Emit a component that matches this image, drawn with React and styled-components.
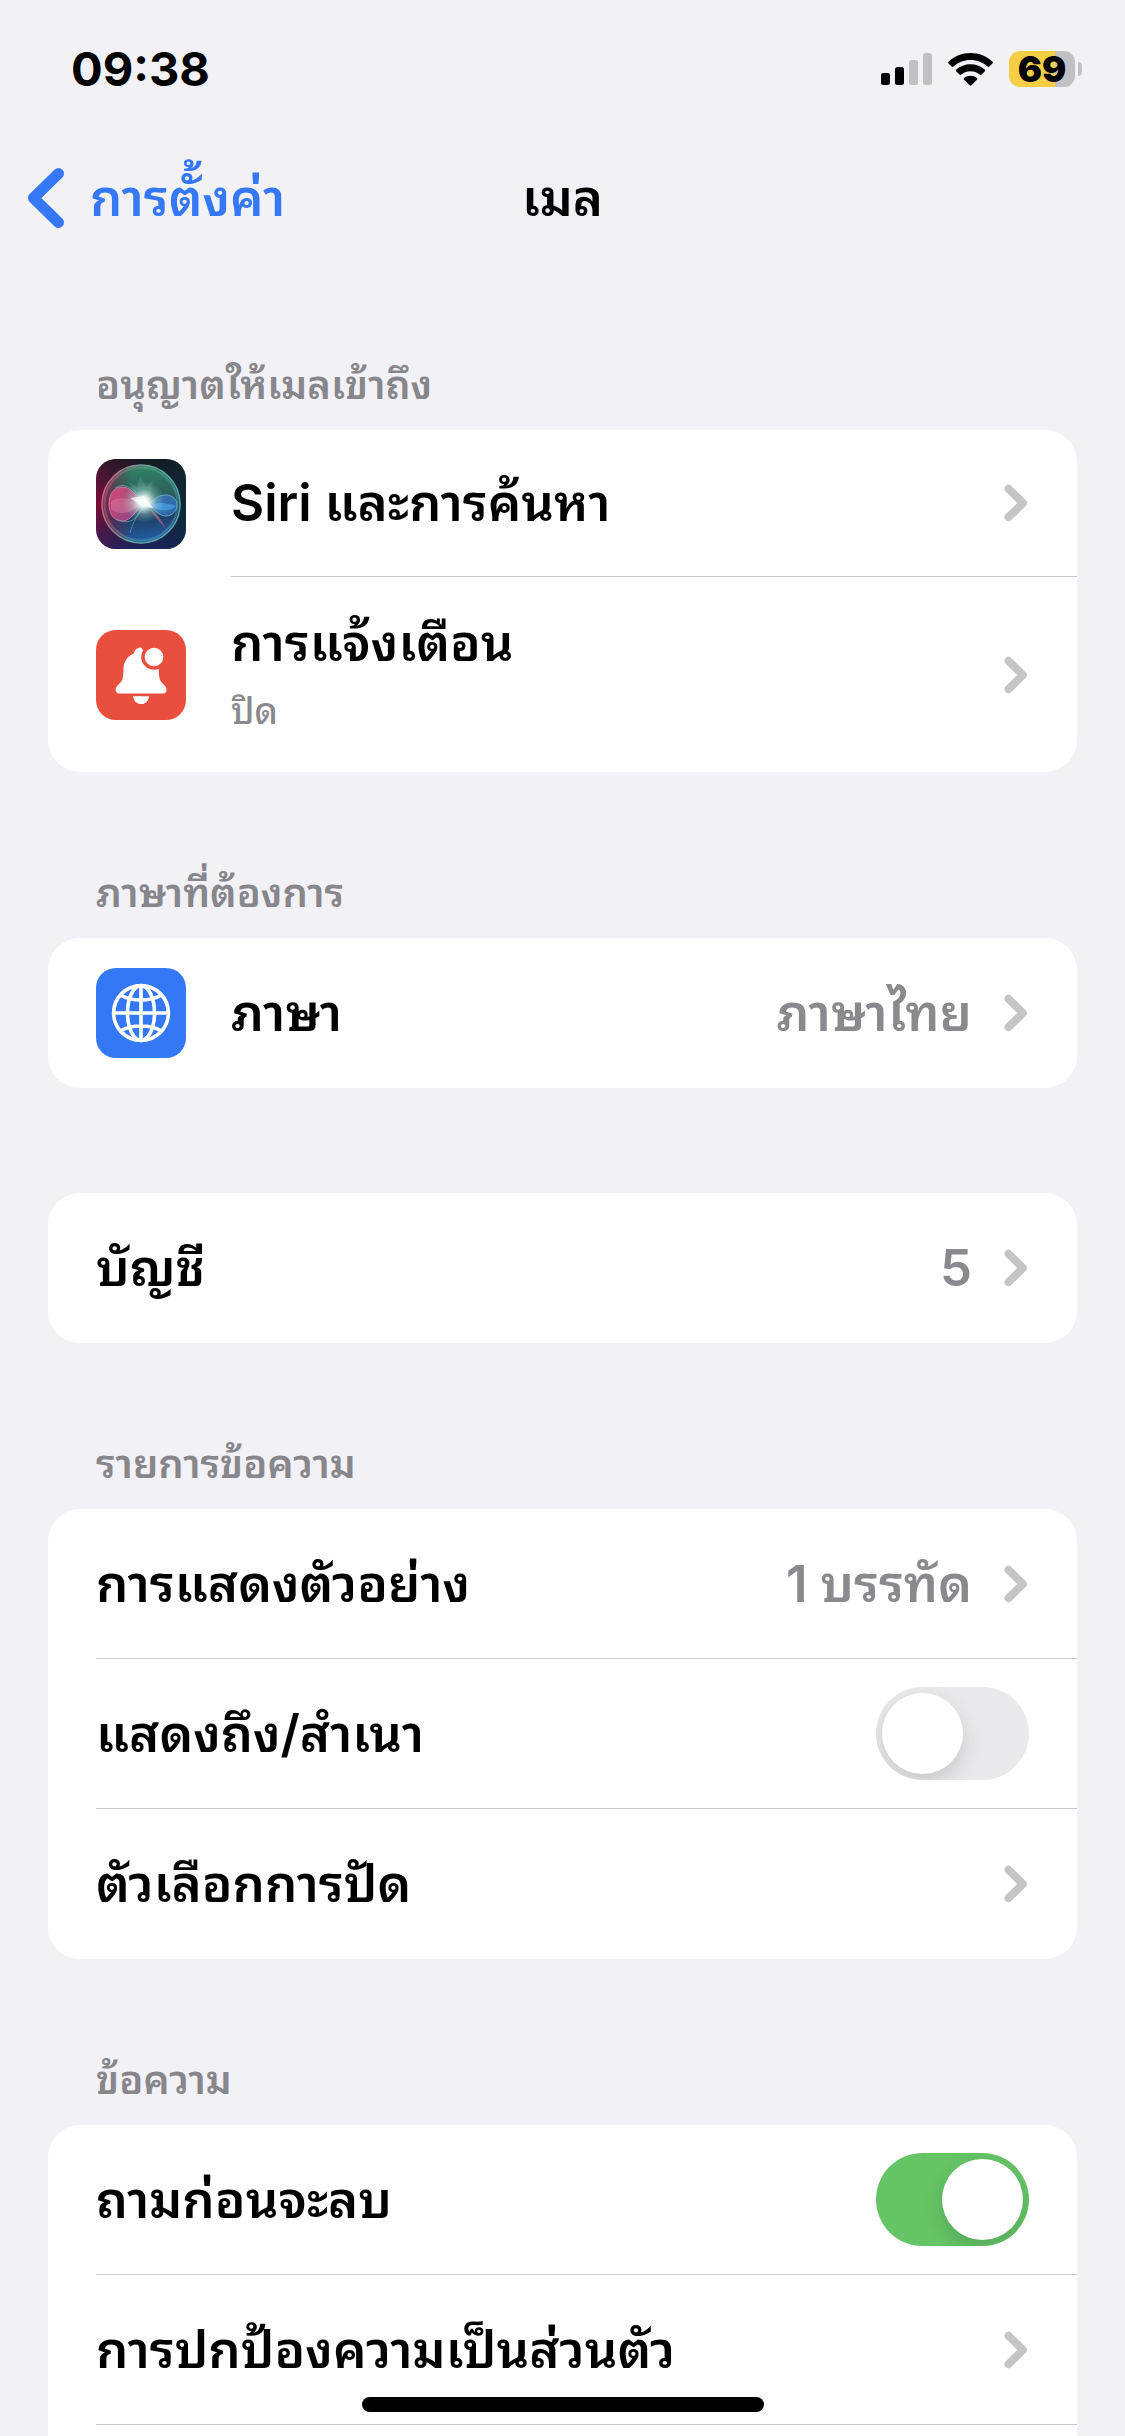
import React, { useState } from 'react'
import styled, { createGlobalStyle } from 'styled-components'

const GlobalStyle = createGlobalStyle`
    * {
        box-sizing: border-box;
    }
    body {
        margin: 0;
        background: #f1f1f6;
        color: #000000;
        font-family: Inter, "Noto Sans Thai Looped", "Noto Sans Thai", "Noto Sans", sans-serif;
        font-size: 51px;
        font-weight: 600;
    }
    button {
        font: inherit;
        color: inherit;
    }
`

const Screen = styled.div`
    display: flex;
    flex-direction: column;
    height: 100vh;
    overflow: hidden;
`

const StatusBar = styled.header`
    display: flex;
    justify-content: space-between;
    align-items: center;
    height: 138px;
    padding: 0 43px 0 71px;
`

const Time = styled.time`
    font-size: 47px;
    font-weight: 700;
    line-height: 60px;
`

const StatusIcons = styled.div`
    display: flex;
    align-items: center;
    gap: 16px;
`

const BatteryWrap = styled.div`
    display: flex;
    align-items: center;
    gap: 3px;
`

const Battery = styled.div`
    width: 66px;
    height: 36px;
    border-radius: 11px;
    background: linear-gradient(90deg, #f5ce46 70%, #c0c0c5 70%);
    font-size: 36px;
    font-weight: 900;
    line-height: 36px;
    text-align: center;
`

const BatteryCap = styled.div`
    width: 4px;
    height: 14px;
    border-radius: 0 4px 4px 0;
    background: #c0c0c5;
`

const NavBar = styled.nav`
    display: grid;
    grid-template-columns: 1fr auto 1fr;
    align-items: center;
    height: 120px;
    padding: 0 27px;
`

const Back = styled.a`
    display: flex;
    align-items: center;
    gap: 25px;
    color: #3478f6;
    text-decoration: none;
    line-height: 80px;
`

const Title = styled.h1`
    margin: 0;
    font-size: 51px;
    font-weight: 600;
    line-height: 80px;
`

const Content = styled.main`
    flex: 1;
    min-height: 0;
    overflow-y: auto;
    scrollbar-width: none;
    padding: 67px 48px 0;
`

const Section = styled.section`
    margin-bottom: 105px;
`

const SectionTitle = styled.h2`
    margin: 0;
    padding: 0 48px;
    color: #86868b;
    font-size: 40px;
    font-weight: 600;
    line-height: 32px;
    height: 61px;

    ${Section}:first-child & {
        margin-top: 44px;
    }
`

const Card = styled.div`
    background: #ffffff;
    border-radius: 32px;
    overflow: hidden;
`

const rowStyles = `
    display: flex;
    align-items: center;
    gap: 45px;
    width: 100%;
    padding: 0 0 0 48px;
    border: 0;
    background: none;
    text-align: left;
`

const RowButton = styled.button`
    ${rowStyles}
`

const RowLabel = styled.label`
    ${rowStyles}
`

const RowBody = styled.span`
    display: flex;
    align-items: center;
    flex: 1;
    height: ${props => props.$height || 150}px;
    padding-right: 48px;
    border-bottom: ${props => (props.$last ? '0' : '1px solid #c6c6c8')};
`

const Texts = styled.span`
    display: flex;
    flex-direction: column;
    flex: 1;
    line-height: 72px;
`

const Subtitle = styled.span`
    color: #8a8a8e;
    font-size: 36px;
    font-weight: 500;
    line-height: 64px;
`

const Value = styled.span`
    margin-right: 32px;
    color: #8a8a8e;
    line-height: 72px;
`

const Switch = styled.input`
    appearance: none;
    flex: none;
    width: 153px;
    height: 93px;
    margin: 0;
    padding: 6px;
    border-radius: 47px;
    background: #e9e9eb;
    overflow: hidden;

    &::before {
        content: '';
        display: block;
        width: 81px;
        height: 81px;
        border-radius: 50%;
        background: #ffffff;
        box-shadow: 0 8px 20px rgba(0, 0, 0, 0.14);
    }

    &:checked {
        background: #65c466;
    }

    &:checked::before {
        margin-left: auto;
    }
`

const HomeIndicator = styled.div`
    position: fixed;
    bottom: 24px;
    left: 50%;
    width: 402px;
    height: 15px;
    margin-left: -201px;
    border-radius: 8px;
    background: #000000;
`

const Chevron = () => (
    <svg width="25" height="38" viewBox="0 0 25 38" fill="none" aria-hidden="true">
        <path d="M4.5 4.8 19 19 4.5 33.2" stroke="#c5c5c7" strokeWidth="8" strokeLinecap="round" strokeLinejoin="round" />
    </svg>
)

const SignalIcon = () => (
    <svg width="51" height="33" viewBox="0 0 51 33" aria-hidden="true">
        <rect x="0" y="20" width="9" height="12" rx="2.5" />
        <rect x="14" y="14" width="9" height="18" rx="2.5" />
        <rect x="28" y="7" width="9" height="25" rx="2.5" fill="#c0c0c5" />
        <rect x="42" y="0" width="9" height="32" rx="2.5" fill="#c0c0c5" />
    </svg>
)

const WifiIcon = () => (
    <svg width="45" height="33" viewBox="0 0 45 33" aria-hidden="true">
        <path d="M22.5 0C31 0 38.700 3.300 44.400 8.600Q45.300 9.500 44.400 10.400L41.300 13.500Q40.500 14.300 39.600 13.500C35.100 9.400 29.100 7 22.500 7S9.900 9.400 5.400 13.500Q4.500 14.300 3.700 13.500L.6 10.400Q-.3 9.500 .6 8.600C6.300 3.300 14 0 22.500 0Z" />
        <path d="M22.500 11.200C28 11.200 32.900 13.200 36.700 16.600Q37.600 17.500 36.700 18.400L33.500 21.500Q32.700 22.300 31.800 21.500C29.300 19.400 26 18.200 22.500 18.200S15.700 19.400 13.200 21.500Q12.300 22.300 11.500 21.500L8.300 18.400Q7.400 17.500 8.300 16.600C12.100 13.200 17 11.200 22.500 11.200Z" />
        <path d="M22.500 22.800C25 22.800 27.200 23.600 28.900 25Q29.800 25.800 28.900 26.700L23.400 32.200Q22.500 33.100 21.600 32.200L16.100 26.700Q15.200 25.800 16.100 25C17.800 23.600 20 22.800 22.500 22.800Z" />
    </svg>
)

const SiriIcon = () => (
    <svg width="90" height="90" viewBox="0 0 90 90" aria-hidden="true">
        <defs>
            <linearGradient id="siriBack" x1="0" y1="0" x2="1" y2="0">
                <stop offset="0" stopColor="#7c0d38" />
                <stop offset=".5" stopColor="#231a33" />
                <stop offset="1" stopColor="#0c2a33" />
            </linearGradient>
            <linearGradient id="siriShade" x1="0" y1="0" x2="0" y2="1">
                <stop offset="0" stopColor="#0b1a18" stopOpacity=".6" />
                <stop offset=".5" stopColor="#16264a" stopOpacity="0" />
                <stop offset="1" stopColor="#17256b" stopOpacity=".7" />
            </linearGradient>
            <linearGradient id="siriOrb" x1=".4" y1="0" x2=".5" y2="1">
                <stop offset="0" stopColor="#2f8765" />
                <stop offset=".4" stopColor="#2b5f5c" />
                <stop offset=".65" stopColor="#1d3a5c" />
                <stop offset="1" stopColor="#2460ad" />
            </linearGradient>
            <linearGradient id="siriTint" x1="0" y1="0" x2="1" y2="0">
                <stop offset="0" stopColor="#8a1f4a" stopOpacity=".85" />
                <stop offset=".4" stopColor="#5a2348" stopOpacity="0" />
            </linearGradient>
            <linearGradient id="siriRing" x1="0" y1=".3" x2="1" y2=".6">
                <stop offset="0" stopColor="#d8607e" />
                <stop offset=".5" stopColor="#62ab9a" />
                <stop offset="1" stopColor="#57a7b4" />
            </linearGradient>
            <linearGradient id="siriPink" x1="0" y1="0" x2="1" y2="1">
                <stop offset="0" stopColor="#ef4a7a" />
                <stop offset="1" stopColor="#8c4a92" />
            </linearGradient>
            <radialGradient id="siriGlow">
                <stop offset="0" stopColor="#ffffff" />
                <stop offset=".25" stopColor="#f2fffb" stopOpacity=".9" />
                <stop offset=".6" stopColor="#b9ecdf" stopOpacity=".35" />
                <stop offset="1" stopColor="#9bdfd0" stopOpacity="0" />
            </radialGradient>
        </defs>
        <rect width="90" height="90" rx="20" fill="url(#siriBack)" />
        <rect width="90" height="90" rx="20" fill="url(#siriShade)" />
        <circle cx="45" cy="45" r="39" fill="url(#siriOrb)" />
        <circle cx="45" cy="45" r="39" fill="url(#siriTint)" stroke="url(#siriRing)" strokeWidth="1.5" />
        <circle cx="45" cy="45" r="36.5" fill="none" stroke="url(#siriRing)" strokeWidth="2" opacity=".45" />
        <path d="M48 45C40 35 34 28 26 28 18 28 13 35 13 45S18 62 26 62C36 62 39 51 48 45Z" fill="url(#siriPink)" stroke="#e57b9f" opacity=".85" />
        <path d="M48 44C40 31 30 22 19 29M48 46C41 60 34 67 20 60" fill="none" stroke="#6aa9ba" opacity=".7" />
        <path d="M15 43C22 36 35 40 46 44 38 53 24 58 15 50Z" fill="#e486a5" opacity=".4" />
        <path d="M52 46C60 38 64 36 70 36 77 36 81 41 81 46S77 57 70 57C63 57 59 51 52 46Z" fill="#3273b8" stroke="#70b5df" opacity=".85" />
        <path d="M54 47C62 42 71 44 80 47 75 53 63 53 54 47Z" fill="#4ba0ea" opacity=".7" />
        <path d="M49 46C42 54 37 63 34 74" fill="none" stroke="#4d98bd" opacity=".8" />
        <path d="M53 48C60 54 66 61 69 69 62 62 57 56 53 48Z" fill="#a86a88" opacity=".7" />
        <path d="M47 43 31 22 41 28 44 17 50 28 57 21 55 35Z" fill="#bdeeda" opacity=".12" />
        <circle cx="48" cy="43" r="21" fill="url(#siriGlow)" />
        <path d="M34 39 48 37 57 49 46 47Z" fill="#ffffff" opacity=".7" />
    </svg>
)

const BellIcon = () => (
    <svg width="90" height="90" viewBox="0 0 90 90" aria-hidden="true">
        <rect width="90" height="90" rx="20" fill="#ea4e3d" />
        <path
            fill="#ffffff"
            d="M45 17.500C41 17.500 38.500 20 37.600 23.600 31 26.500 27.600 32 27.500 39 27.300 46 27 50 24.500 52.600 21.500 55.500 19.600 57.500 19.600 60 19.600 62 21 63.400 23.500 63.400H66.700C69.200 63.400 70.600 62 70.600 60 70.600 57.500 68.500 55.500 65.700 52.600 63.200 50 63 46 62.700 39Z"
        />
        <circle cx="58" cy="27" r="12.8" fill="#ea4e3d" />
        <circle cx="58" cy="27" r="9.300" fill="#ffffff" />
        <path d="M37 66.200H53.200C52.500 71 49.500 74 45.100 74S37.700 71 37 66.200Z" fill="#ffffff" />
    </svg>
)

const GlobeIcon = () => (
    <svg width="90" height="90" viewBox="0 0 90 90" aria-hidden="true">
        <rect width="90" height="90" rx="20" fill="#3478f6" />
        <g fill="none" stroke="#ffffff" strokeWidth="3.600">
            <circle cx="45" cy="45" r="27.400" />
            <ellipse cx="45" cy="45" rx="13.500" ry="27.400" />
            <path d="M45 17V73M17 45H73M25.500 27.500C35 33.500 55 33.500 64.500 27.500M25.500 62.500C35 56.500 55 56.500 64.500 62.500" />
        </g>
    </svg>
)

const LinkRow = ({ icon, title, subtitle, value, height, last }) => (
    <RowButton type="button">
        {icon}
        <RowBody $height={height} $last={last}>
            <Texts>
                {title}
                {subtitle && <Subtitle>{subtitle}</Subtitle>}
            </Texts>
            {value && <Value>{value}</Value>}
            <Chevron />
        </RowBody>
    </RowButton>
)

const SwitchRow = ({ id, title, on }) => {
    const [checked, setChecked] = useState(on)
    return (
        <RowLabel htmlFor={id}>
            <RowBody>
                <Texts>{title}</Texts>
                <Switch type="checkbox" id={id} checked={checked} onChange={e => setChecked(e.target.checked)} />
            </RowBody>
        </RowLabel>
    )
}

const App = () => (
    <Screen>
        <GlobalStyle />
        <StatusBar>
            <Time>09:38</Time>
            <StatusIcons>
                <SignalIcon />
                <WifiIcon />
                <BatteryWrap>
                    <Battery>69</Battery>
                    <BatteryCap />
                </BatteryWrap>
            </StatusIcons>
        </StatusBar>
        <NavBar>
            <Back href="#settings">
                <svg width="38" height="62" viewBox="0 0 38 62" fill="none" aria-hidden="true">
                    <path d="M31.5 6.5 6.5 31 31.5 55.5" stroke="#3478f6" strokeWidth="11" strokeLinecap="round" strokeLinejoin="round" />
                </svg>
                การตั้งค่า
            </Back>
            <Title>เมล</Title>
        </NavBar>
        <Content>
            <Section>
                <SectionTitle>อนุญาตให้เมลเข้าถึง</SectionTitle>
                <Card>
                    <LinkRow icon={<SiriIcon />} title="Siri และการค้นหา" height={147} />
                    <LinkRow icon={<BellIcon />} title="การแจ้งเตือน" subtitle="ปิด" height={195} last />
                </Card>
            </Section>
            <Section>
                <SectionTitle>ภาษาที่ต้องการ</SectionTitle>
                <Card>
                    <LinkRow icon={<GlobeIcon />} title="ภาษา" value="ภาษาไทย" last />
                </Card>
            </Section>
            <Section>
                <Card>
                    <LinkRow title="บัญชี" value="5" last />
                </Card>
            </Section>
            <Section>
                <SectionTitle>รายการข้อความ</SectionTitle>
                <Card>
                    <LinkRow title="การแสดงตัวอย่าง" value="1 บรรทัด" />
                    <SwitchRow id="showToCc" title="แสดงถึง/สำเนา" on={false} />
                    <LinkRow title="ตัวเลือกการปัด" last />
                </Card>
            </Section>
            <Section>
                <SectionTitle>ข้อความ</SectionTitle>
                <Card>
                    <SwitchRow id="askBeforeDelete" title="ถามก่อนจะลบ" on />
                    <LinkRow title="การปกป้องความเป็นส่วนตัว" />
                    <RowBody $last />
                </Card>
            </Section>
        </Content>
        <HomeIndicator />
    </Screen>
)

export default App
